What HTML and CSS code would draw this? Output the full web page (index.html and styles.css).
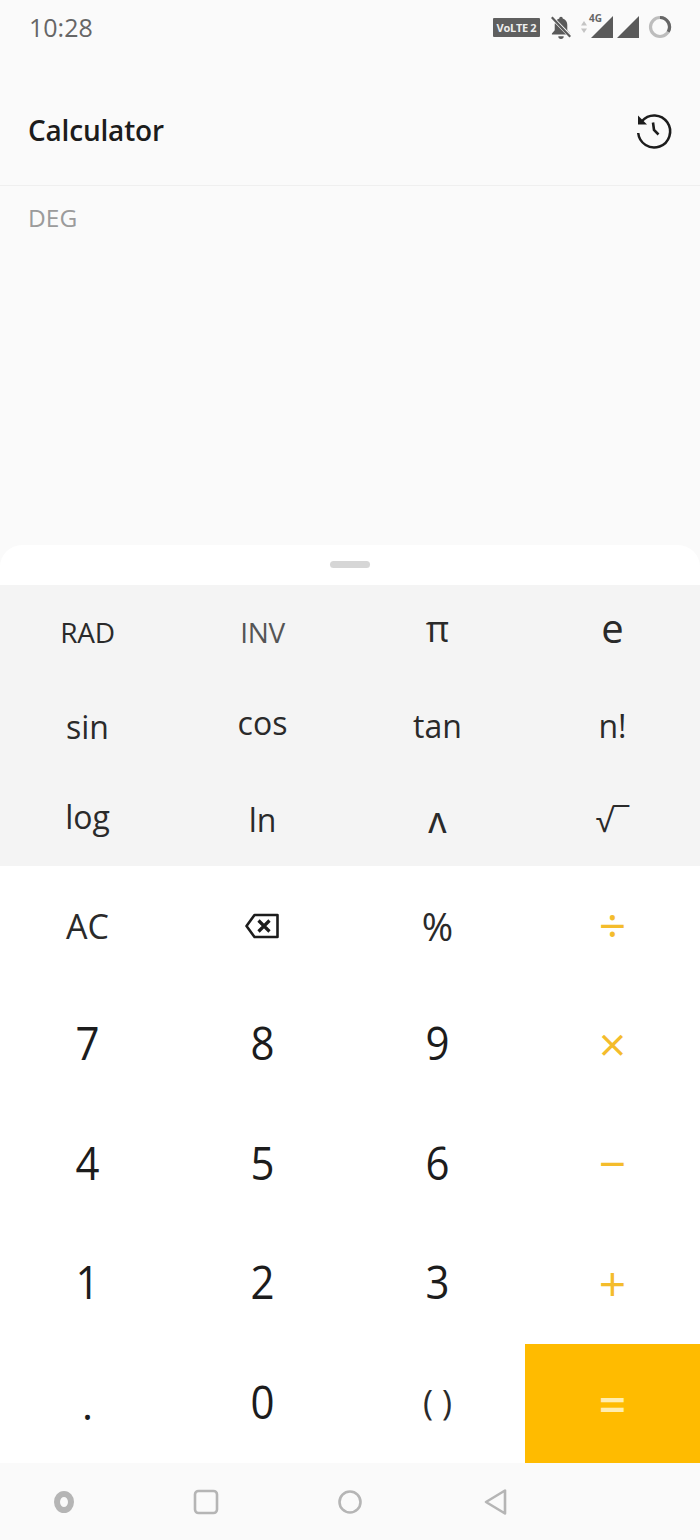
FILE: index.html
```html
<!DOCTYPE html>
<html lang="en">
  <head>
    <meta charset="UTF-8" />
    <title>Calculator</title>
    <link rel="stylesheet" href="styles.css">
  </head>
  <body>
    <div id="phone">
      <div class="status-bar">
        <span class="time">10:28</span>
        <div class="status-icons">
          <span class="volte">VoLTE 2</span>
          <svg class="bell" width="26" height="26" viewBox="0 0 24 24">
            <path d="M12 2.500c-1 0-1.600.7-1.600 1.600C7.600 5 6.200 7.200 6.200 10v5L3.600 18v1h16.800v-1l-2.600-3v-5c0-2.800-1.400-5-4.200-5.900 0-.9-.6-1.600-1.600-1.600z" fill="#5a5a5a"/>
            <path d="M9.500 20.500a2.500 2.500 0 0 0 5 0z" fill="#5a5a5a"/>
            <path d="M3 2.500 21 21" stroke="#fafafa" stroke-width="3.400"/>
            <path d="M3.500 3 20.500 21" stroke="#5a5a5a" stroke-width="2"/>
          </svg>
          <div class="signal-4g">
            <svg width="8" height="16" viewBox="0 0 8 16">
              <path d="M4 2 7 6.500H1zM4 14 1 9.500h6z" fill="#c4c4c4"/>
            </svg>
            <span class="label-4g">4G</span>
            <svg class="tri" width="22" height="22" viewBox="0 0 22 22">
              <path d="M22 0V22H0z" fill="#5a5a5a"/>
            </svg>
          </div>
          <svg class="tri2" width="22" height="22" viewBox="0 0 22 22">
            <path d="M22 0V22H0z" fill="#5a5a5a"/>
          </svg>
          <svg class="battery" width="24" height="24" viewBox="0 0 24 24">
            <circle cx="12" cy="12" r="9.500" fill="none" stroke="#bdbdbd" stroke-width="3.200"/>
            <path d="M12 2.500a9.500 9.500 0 0 1 8.200 14.300" fill="none" stroke="#666" stroke-width="3.200"/>
          </svg>
        </div>
      </div>

      <div class="app-header">
        <h1>Calculator</h1>
        <svg class="history" width="40" height="40" viewBox="0 0 40 40">
          <path d="M8 10A16 16 0 1 1 4.200 22" fill="none" stroke="#1c1c1c" stroke-width="2.500"/>
          <path d="M4 4.500V13.500H13z" fill="#1c1c1c"/>
          <path d="M19 11.500 20 19 24.500 23.500" fill="none" stroke="#1c1c1c" stroke-width="2.600"/>
        </svg>
      </div>

      <div class="display">
        <span class="deg">DEG</span>
      </div>

      <div class="sheet">
        <div class="handle-row"><span class="handle"></span></div>

        <div class="sci-keys">
          <div class="key key-small">RAD</div>
          <div class="key key-small light">INV</div>
          <div class="key key-pi">π</div>
          <div class="key key-e">e</div>
          <div class="key down">sin</div>
          <div class="key up">cos</div>
          <div class="key">tan</div>
          <div class="key">n!</div>
          <div class="key up">log</div>
          <div class="key">ln</div>
          <div class="key key-caret">ʌ</div>
          <div class="key">√¯</div>
        </div>

        <div class="main-keys">
          <div class="key">AC</div>
          <div class="key">
            <svg class="backspace" width="36" height="28" viewBox="0 0 36 28">
              <path d="M10.500 3H33.500V25H10.500L2.500 14z" fill="none" stroke="#1c1c1c" stroke-width="2.600" stroke-linejoin="round"/>
              <path d="M14.500 8.500 25.500 19.500M25.500 8.500 14.500 19.500" stroke="#1c1c1c" stroke-width="3.200"/>
            </svg>
          </div>
          <div class="key key-percent">%</div>
          <div class="key op">÷</div>
          <div class="key num">7</div>
          <div class="key num">8</div>
          <div class="key num">9</div>
          <div class="key op">×</div>
          <div class="key num">4</div>
          <div class="key num">5</div>
          <div class="key num">6</div>
          <div class="key op">−</div>
          <div class="key num">1</div>
          <div class="key num">2</div>
          <div class="key num">3</div>
          <div class="key op">+</div>
          <div class="key key-dot">.</div>
          <div class="key num">0</div>
          <div class="key key-paren">( )</div>
          <div class="key equals">=</div>
        </div>
      </div>

      <div class="nav-bar">
        <svg width="22" height="22" viewBox="0 0 22 22">
          <ellipse cx="11" cy="11" rx="7" ry="8" fill="none" stroke="#b5b5b5" stroke-width="6"/>
        </svg>
        <svg width="26" height="26" viewBox="0 0 26 26">
          <rect x="2" y="2" width="22" height="22" rx="3.500" fill="none" stroke="#b5b5b5" stroke-width="2.600"/>
        </svg>
        <svg width="26" height="26" viewBox="0 0 26 26">
          <circle cx="13" cy="13" r="10.500" fill="none" stroke="#b5b5b5" stroke-width="2.600"/>
        </svg>
        <svg class="nav-back" width="26" height="28" viewBox="0 0 26 28">
          <path d="M22 2.500V25.500L3 14z" fill="none" stroke="#b5b5b5" stroke-width="2.600" stroke-linejoin="round"/>
        </svg>
      </div>
    </div>
  </body>
</html>
```

FILE: styles.css
```css
* {
  box-sizing: border-box;
  padding: 0;
  margin: 0;
}

body {
  font-family: "Open Sans", "Noto Sans", sans-serif;
  background-color: #fafafa;
}

#phone {
  width: 700px;
  height: 1540px;
  display: flex;
  flex-direction: column;
  overflow: hidden;
  background-color: #fafafa;
}

.status-bar {
  height: 56px;
  padding: 0 28px 2px 29px;
  display: flex;
  justify-content: space-between;
  align-items: center;
}

.time {
  font-size: 25px;
  color: #666;
}

.status-icons {
  display: flex;
  align-items: center;
}

.volte {
  width: 47px;
  height: 19px;
  background-color: #5f5f5f;
  color: #eee;
  font-size: 11px;
  font-weight: 700;
  line-height: 19px;
  text-align: center;
  white-space: nowrap;
  border-radius: 1px;
  letter-spacing: -0.3px;
}

.bell {
  margin-left: 8px;
}

.signal-4g {
  position: relative;
  display: flex;
  align-items: center;
  margin-left: 6px;
}

.tri {
  margin-left: 3px;
}

.tri2 {
  margin-left: 4px;
}

.label-4g {
  position: absolute;
  left: 9px;
  top: -5px;
  font-size: 10px;
  font-weight: 700;
  color: #666;
}

.battery {
  margin-left: 9px;
}

.app-header {
  height: 130px;
  padding: 18px 26px 0 28px;
  display: flex;
  justify-content: space-between;
  align-items: center;
  border-bottom: 1px solid #efefef;
}

.app-header h1 {
  font-size: 28px;
  font-weight: 600;
  color: #1c1c1c;
  letter-spacing: -0.2px;
}

.history {
  margin-top: 2px;
}

.display {
  height: 359px;
  padding: 16px 28px;
}

.deg {
  font-size: 24.5px;
  color: #9b9b9b;
  line-height: 32px;
}

.sheet {
  flex: 1;
  background-color: #fff;
  border-radius: 22px 22px 0 0;
  display: flex;
  flex-direction: column;
}

.handle-row {
  height: 40px;
  padding-top: 16px;
  display: flex;
  justify-content: center;
}

.handle {
  width: 40px;
  height: 7px;
  border-radius: 4px;
  background-color: #d6d6d6;
}

.sci-keys {
  height: 281px;
  display: grid;
  grid-template-columns: repeat(4, 175px);
  grid-template-rows: repeat(3, 1fr);
  background-color: #f4f4f4;
  font-size: 32px;
}

.main-keys {
  height: 597px;
  display: grid;
  grid-template-columns: repeat(4, 175px);
  grid-template-rows: repeat(5, 1fr);
  font-size: 34px;
}

.key {
  display: flex;
  justify-content: center;
  align-items: center;
  color: #2a2a2a;
}

.key-small {
  font-size: 28px;
  letter-spacing: -0.3px;
}

.light {
  color: #555;
}

.key-pi {
  font-size: 36px;
  padding-bottom: 6px;
}

.key-e {
  font-size: 40px;
  padding-bottom: 8px;
}

.key-caret {
  font-size: 36px;
}

.down {
  padding-top: 3px;
}

.up {
  padding-bottom: 6px;
}

.key-percent {
  font-size: 38px;
}

.backspace {
  margin-right: 2px;
}

.num {
  font-size: 42px;
  color: #1c1c1c;
  padding-bottom: 5px;
  transform: scaleY(1.1);
}

.key-dot {
  font-size: 42px;
  color: #1c1c1c;
}

.key-paren {
  font-size: 34px;
  padding-bottom: 3px;
}

.op {
  font-size: 48px;
  font-weight: 500;
  color: #f4bc2c;
  padding-bottom: 3px;
}

.equals {
  font-size: 48px;
  font-weight: 600;
  color: #ffedb0;
  background-color: #ffbb00;
}

.nav-bar {
  height: 77px;
  padding-left: 53px;
  display: flex;
  gap: 118px;
  align-items: center;
}

.nav-back {
  margin-left: 2px;
}
```
